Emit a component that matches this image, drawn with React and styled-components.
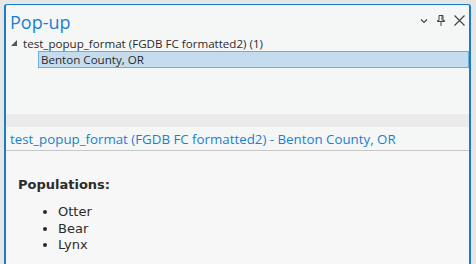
import React from 'react';
import styled, { createGlobalStyle } from 'styled-components';

const GlobalStyle = createGlobalStyle`
  html, body {
    margin: 0;
    padding: 0;
    background: #e6e6e6;
  }
  body {
    font-family: 'Open Sans', 'Noto Sans', sans-serif;
  }
`;

const Panel = styled.div`
  margin: 4px 0 0 4px;
  width: 463px;
  height: 260px;
  border: 2px solid #1a7bcb;
  border-top-width: 1px;
  border-bottom: none;
  border-radius: 3px 3px 0 0;
  background: #f5f7f7;
  display: flex;
  flex-direction: column;
  overflow: hidden;
`;

const TitleBar = styled.div`
  height: 31px;
  display: flex;
  align-items: center;
  justify-content: space-between;
  padding: 0 4px 0 4px;
`;

const Title = styled.div`
  font-size: 18px;
  color: #1b7fcf;
  margin-top: 2px;
`;

const Tools = styled.div`
  display: flex;
  align-items: center;
  gap: 8px;
`;

const ToolButton = styled.span`
  width: ${(p) => p.$w || 12}px;
  height: 14px;
  display: flex;
  align-items: center;
  justify-content: center;
`;

const Tree = styled.div`
  height: 77px;
  padding-top: 1px;
`;

const LayerRow = styled.div`
  display: flex;
  align-items: center;
  height: 12px;
  font-size: 11.6px;
  color: #2b2b2b;
  padding-left: 5px;
  gap: 6px;
`;

const FeatureRow = styled.div`
  margin: 2px 0 0 32px;
  height: 15px;
  background: #c5dcef;
  border: 1px solid #6aaee0;
  font-size: 11.6px;
  color: #2b2b2b;
  line-height: 15px;
  padding-left: 2px;
`;

const Divider = styled.div`
  height: 13px;
  background: #ebebeb;
`;

const FeatureTitle = styled.div`
  height: 23px;
  line-height: 24px;
  padding-left: 4px;
  font-size: 13.3px;
  color: #1b7fcf;
  border-bottom: 1px solid #c6c6c6;
`;

const Content = styled.div`
  flex: 1;
  background: #f7f7f7;
  padding: 26px 0 0 12px;
  font-family: 'DejaVu Sans', Verdana, sans-serif;
  font-size: 13px;
  color: #2b2b2b;
`;

const Heading = styled.div`
  font-weight: bold;
`;

const List = styled.ul`
  margin: 12px 0 0;
  padding-left: 40px;
  line-height: 16.7px;
`;

export default function App() {
  return (
    <>
      <GlobalStyle />
      <Panel>
        <TitleBar>
          <Title>Pop-up</Title>
          <Tools>
            <ToolButton $w={9}>
              <svg width="8" height="6" viewBox="0 0 8 6">
                <path d="M1 1.5 L4 4.5 L7 1.5" fill="none" stroke="#444" strokeWidth="1.2" />
              </svg>
            </ToolButton>
            <ToolButton $w={9}>
              <svg width="8" height="11" viewBox="0 0 8 11">
                <path d="M2 0.5 H6 V5.5 H7.5 V6.5 H0.5 V5.5 H2 Z" fill="none" stroke="#444" strokeWidth="1" />
                <path d="M5 1 V5.5" stroke="#444" strokeWidth="1" />
                <path d="M4 6.5 V11" stroke="#444" strokeWidth="1" />
              </svg>
            </ToolButton>
            <ToolButton $w={12}>
              <svg width="11" height="11" viewBox="0 0 11 11">
                <path d="M0.5 0.5 L10.5 10.5 M10.5 0.5 L0.5 10.5" stroke="#444" strokeWidth="1.2" />
              </svg>
            </ToolButton>
          </Tools>
        </TitleBar>
        <Tree>
          <LayerRow>
            <svg width="6" height="6" viewBox="0 0 6 6">
              <path d="M6 0 V6 H0 Z" fill="#555" />
            </svg>
            test_popup_format (FGDB FC formatted2) (1)
          </LayerRow>
          <FeatureRow>Benton County, OR</FeatureRow>
        </Tree>
        <Divider />
        <FeatureTitle>test_popup_format (FGDB FC formatted2) - Benton County, OR</FeatureTitle>
        <Content>
          <Heading>Populations:</Heading>
          <List>
            <li>Otter</li>
            <li>Bear</li>
            <li>Lynx</li>
          </List>
        </Content>
      </Panel>
    </>
  );
}
